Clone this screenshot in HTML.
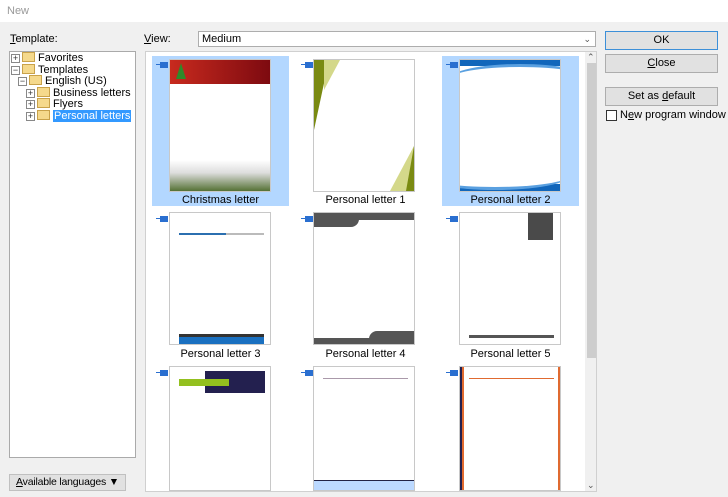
<!DOCTYPE html>
<html><head><style>
*{margin:0;padding:0;box-sizing:border-box}
body{width:728px;height:497px;background:#f0f0f0;font-family:"Liberation Sans",sans-serif;font-size:11px;color:#000;position:relative;overflow:hidden;white-space:nowrap}
.a{position:absolute}
.btn{position:absolute;left:605px;width:113px;height:19px;background:#e1e1e1;border:1px solid #adadad;text-align:center;line-height:17px}
.t{position:absolute;width:102px;height:133px;background:#fff;border:1px solid #c8c8c8;overflow:hidden}
.hl{position:absolute;width:137px;height:150px;background:#b3d7ff}
.lb{position:absolute;width:137px;text-align:center;font-size:11px}
.pin{position:absolute;width:8px;height:6px;background:#2a6fd0}
.pin:before{content:"";position:absolute;left:-4px;top:2px;width:4px;height:1px;background:#2a6fd0}
.fold{display:inline-block;width:13px;height:10px;background:#f5d98c;border:1px solid #c9a24a;vertical-align:-1px;margin-right:3px}
.pl{display:inline-block;width:9px;height:9px;border:1px solid #888;background:#fff;font-size:9px;line-height:7px;text-align:center;vertical-align:0;margin-right:2px;color:#333}
.tr{position:absolute;white-space:nowrap;line-height:12px}
</style></head><body>
<div class="a" style="left:0;top:0;width:728px;height:22px;background:#fff"></div>
<div class="a" style="left:7px;top:5px;color:#999">New</div>
<div class="a" style="left:10px;top:33px"><u>T</u>emplate:</div>
<div class="a" style="left:144px;top:33px"><u>V</u>iew:</div>
<div class="a" style="left:198px;top:31px;width:398px;height:16px;background:#fff;border:1px solid #adadad;padding-left:3px;line-height:14px">Medium<span style="position:absolute;right:4px;top:0;color:#555;font-size:9px">&#8964;</span></div>
<div class="a" style="left:9px;top:51px;width:127px;height:407px;background:#fff;border:1px solid #aaa"></div>
<div class="tr" style="left:11px;top:52px"><span class="pl">+</span><span class="fold"></span>Favorites</div>
<div class="tr" style="left:11px;top:64px"><span class="pl">−</span><span class="fold"></span>Templates</div>
<div class="tr" style="left:18px;top:75px"><span class="pl">−</span><span class="fold"></span>English (US)</div>
<div class="tr" style="left:26px;top:87px"><span class="pl">+</span><span class="fold"></span>Business letters</div>
<div class="tr" style="left:26px;top:98px"><span class="pl">+</span><span class="fold"></span>Flyers</div>
<div class="tr" style="left:26px;top:110px"><span class="pl">+</span><span class="fold"></span><span style="background:#3399ff;color:#fff;padding:0 1px">Personal letters</span></div>
<div class="a" style="left:9px;top:474px;width:117px;height:17px;background:#e1e1e1;border:1px solid #c0c0c0;text-align:center;line-height:15px;font-size:10.5px;letter-spacing:-0.2px"><u>A</u>vailable languages &#9660;</div>

<div class="a" style="left:145px;top:51px;width:452px;height:441px;background:#fff;border:1px solid #d0d0d0;overflow:hidden">
<div class="a" style="left:439px;top:0;width:12px;height:440px;background:#f0f0f0"></div>
<div class="a" style="left:441px;top:11px;width:9px;height:295px;background:#cdcdcd"></div>
<div class="a" style="left:441px;top:0;font-size:9px;color:#555">&#8963;</div>
<div class="a" style="left:441px;top:428px;font-size:9px;color:#555">&#8964;</div>
</div>

<div class="hl" style="left:152px;top:56px"></div>
<div class="hl" style="left:442px;top:56px"></div>
<!-- row1 -->
<div class="t" style="left:169px;top:59px"><div class="a" style="left:0;top:0;width:100px;height:24px;background:linear-gradient(90deg,#c82a1e,#7d0a10)"></div><div class="a" style="left:6px;top:3px;width:0;height:0;border-left:5px solid transparent;border-right:5px solid transparent;border-bottom:16px solid #2f8a2a"></div><div class="a" style="left:0;top:100px;width:100px;height:32px;background:linear-gradient(#fff,#ddd 40%,#4d6b2c)"></div></div>
<div class="t" style="left:313px;top:59px"><div class="a" style="left:0;top:0;width:0;height:0;border-top:70px solid #7a8a12;border-right:15px solid transparent"></div><div class="a" style="left:10px;top:0;width:0;height:0;border-top:30px solid #d4d88a;border-right:16px solid transparent"></div><div class="a" style="right:0;bottom:0;width:0;height:0;border-bottom:45px solid #d4d88a;border-left:24px solid transparent"></div><div class="a" style="right:0;bottom:0;width:0;height:0;border-bottom:45px solid #7a8a12;border-left:8px solid transparent"></div></div>
<div class="t" style="left:459px;top:59px"><div class="a" style="left:0;top:0;width:100px;height:6px;background:#1166bb"></div><div class="a" style="left:-10px;top:4px;width:140px;height:30px;border-radius:50%;background:#fff;border-top:3px solid #5aa0e0"></div><div class="a" style="left:0;top:124px;width:100px;height:8px;background:#1166bb"></div><div class="a" style="left:-40px;top:100px;width:150px;height:30px;border-radius:50%;background:#fff;border-bottom:3px solid #5aa0e0"></div></div>
<div class="lb" style="left:152px;top:194px">Christmas letter</div>
<div class="lb" style="left:297px;top:194px">Personal letter 1</div>
<div class="lb" style="left:442px;top:194px">Personal letter 2</div>
<!-- row2 -->
<div class="t" style="left:169px;top:212px"><div class="a" style="left:9px;top:20px;width:85px;height:2px;background:#bbb"></div><div class="a" style="left:9px;top:20px;width:47px;height:2px;background:#2b6fb0"></div><div class="a" style="left:9px;top:121px;width:85px;height:10px;background:#1a70c0;border-top:3px solid #333"></div></div>
<div class="t" style="left:313px;top:212px"><div class="a" style="left:0;top:0;width:100px;height:7px;background:#555"></div><div class="a" style="left:0;top:6px;width:45px;height:8px;background:#555;border-bottom-right-radius:8px"></div><div class="a" style="left:55px;top:118px;width:45px;height:14px;background:#555;border-top-left-radius:8px"></div><div class="a" style="left:0;top:125px;width:100px;height:7px;background:#555"></div></div>
<div class="t" style="left:459px;top:212px"><div class="a" style="left:68px;top:0;width:25px;height:27px;background:#4a4a4a"></div><div class="a" style="left:9px;top:122px;width:85px;height:3px;background:#555"></div></div>
<div class="lb" style="left:152px;top:348px">Personal letter 3</div>
<div class="lb" style="left:297px;top:348px">Personal letter 4</div>
<div class="lb" style="left:442px;top:348px">Personal letter 5</div>
<!-- row3 -->
<div class="t" style="left:169px;top:366px;height:125px"><div class="a" style="left:35px;top:4px;width:60px;height:22px;background:#23204f"></div><div class="a" style="left:9px;top:12px;width:50px;height:7px;background:#93c01f"></div></div>
<div class="t" style="left:313px;top:366px;height:125px"><div class="a" style="left:9px;top:11px;width:85px;height:1px;background:#a9a"></div><div class="a" style="left:0;top:113px;width:100px;height:12px;background:#bcd9ff;border-top:1px solid #224"></div></div>
<div class="t" style="left:459px;top:366px;height:125px"><div class="a" style="left:0;top:0;width:2px;height:125px;background:#23204f"></div><div class="a" style="left:2px;top:0;width:2px;height:125px;background:#e06a30"></div><div class="a" style="right:0;top:0;width:2px;height:125px;background:#e06a30"></div><div class="a" style="left:9px;top:11px;width:85px;height:1px;background:#e06a30"></div></div>

<div class="pin" style="left:160px;top:62px"></div><div class="pin" style="left:305px;top:62px"></div><div class="pin" style="left:450px;top:62px"></div>
<div class="pin" style="left:160px;top:216px"></div><div class="pin" style="left:305px;top:216px"></div><div class="pin" style="left:450px;top:216px"></div>
<div class="pin" style="left:160px;top:370px"></div><div class="pin" style="left:305px;top:370px"></div><div class="pin" style="left:450px;top:370px"></div>

<div class="btn" style="top:31px;border:1px solid #3c8fd8">OK</div>
<div class="btn" style="top:54px"><u>C</u>lose</div>
<div class="btn" style="top:87px">Set as <u>d</u>efault</div>
<div class="a" style="left:606px;top:110px;width:11px;height:11px;background:#fff;border:1px solid #333"></div>
<div class="a" style="left:620px;top:109px">N<u>e</u>w program window</div>
</body></html>
